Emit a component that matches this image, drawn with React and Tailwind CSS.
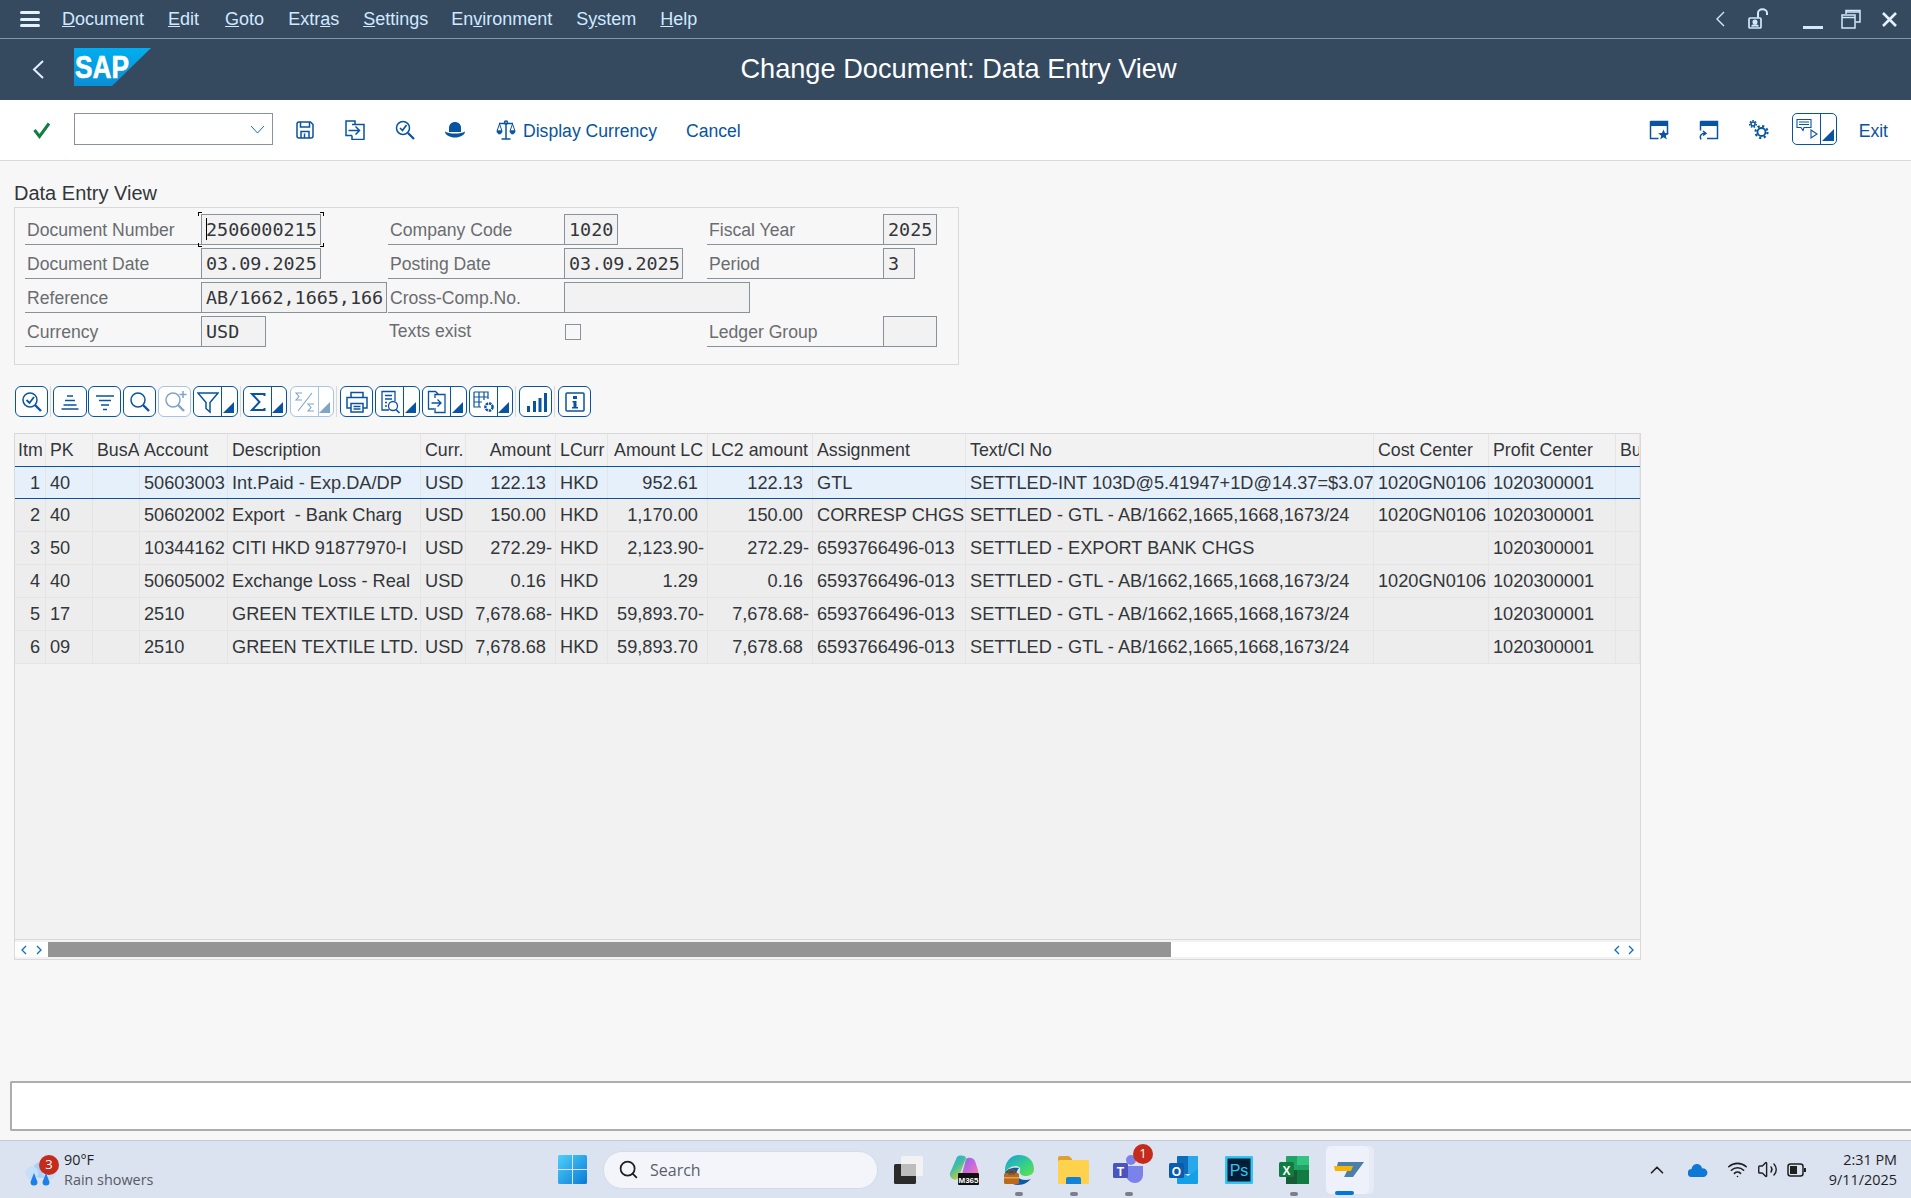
import React from "react";
import { Search, Wifi, Volume2, ChevronUp } from "lucide-react";

const columns = [
  { key: "itm", label: "Itm", w: "w-[31px]", right: true, pad: "pl-[3px] pr-[5px]" },
  { key: "pk", label: "PK", w: "w-[47px]" },
  { key: "busa", label: "BusA", w: "w-[47px]" },
  { key: "account", label: "Account", w: "w-[88px]" },
  { key: "desc", label: "Description", w: "w-[193px]" },
  { key: "curr", label: "Curr.", w: "w-[45px]" },
  { key: "amount", label: "Amount", w: "w-[90px]", right: true, sign: true },
  { key: "lcurr", label: "LCurr", w: "w-[52px]" },
  { key: "amountLc", label: "Amount LC", w: "w-[100px]", right: true, sign: true },
  { key: "lc2", label: "LC2 amount", w: "w-[105px]", right: true, sign: true },
  { key: "assign", label: "Assignment", w: "w-[153px]" },
  { key: "text", label: "Text/Cl No", w: "w-[408px]" },
  { key: "cost", label: "Cost Center", w: "w-[115px]" },
  { key: "profit", label: "Profit Center", w: "w-[127px]" },
  { key: "bu", label: "Bu", w: "flex-1" },
];

const settled = "SETTLED - GTL - AB/1662,1665,1668,1673/24";
const rows = [
  { itm: "1", pk: "40", account: "50603003", desc: "Int.Paid - Exp.DA/DP", curr: "USD", amount: "122.13", lcurr: "HKD", amountLc: "952.61", lc2: "122.13", assign: "GTL", text: "SETTLED-INT 103D@5.41947+1D@14.37=$3.07", cost: "1020GN0106", profit: "1020300001" },
  { itm: "2", pk: "40", account: "50602002", desc: "Export  - Bank Charg", curr: "USD", amount: "150.00", lcurr: "HKD", amountLc: "1,170.00", lc2: "150.00", assign: "CORRESP CHGS", text: settled, cost: "1020GN0106", profit: "1020300001" },
  { itm: "3", pk: "50", account: "10344162", desc: "CITI HKD 91877970-I", curr: "USD", amount: "272.29-", lcurr: "HKD", amountLc: "2,123.90-", lc2: "272.29-", assign: "6593766496-013", text: "SETTLED - EXPORT BANK CHGS", cost: "", profit: "1020300001" },
  { itm: "4", pk: "40", account: "50605002", desc: "Exchange Loss - Real", curr: "USD", amount: "0.16", lcurr: "HKD", amountLc: "1.29", lc2: "0.16", assign: "6593766496-013", text: settled, cost: "1020GN0106", profit: "1020300001" },
  { itm: "5", pk: "17", account: "2510", desc: "GREEN TEXTILE LTD.", curr: "USD", amount: "7,678.68-", lcurr: "HKD", amountLc: "59,893.70-", lc2: "7,678.68-", assign: "6593766496-013", text: settled, cost: "", profit: "1020300001" },
  { itm: "6", pk: "09", account: "2510", desc: "GREEN TEXTILE LTD.", curr: "USD", amount: "7,678.68", lcurr: "HKD", amountLc: "59,893.70", lc2: "7,678.68", assign: "6593766496-013", text: settled, cost: "", profit: "1020300001" },
];

const Ic = ({ w = 24, h = 24, vb = "0 0 24 24", className = "", children }) => (
  <svg width={w} height={h} viewBox={vb} fill="none" stroke="#0854a0" strokeWidth="1.5" className={`shrink-0 ${className}`}>
    {children}
  </svg>
);

const Menu = ({ className = "", children }) => <span className={`whitespace-nowrap ${className}`}>{children}</span>;

const Field = ({ label, w, value, children }) => (
  <div className="flex h-[31px]">
    <div className="w-[176px] shrink-0 border-b border-[#89919a] pl-[2px] pt-[3px] text-[#6a6d70]">{label}</div>
    {children || (
      <div className={`relative h-[31px] shrink-0 overflow-hidden whitespace-pre border border-[#89919a] bg-[#f2f2f2] pl-[4px] font-['DejaVu_Sans_Mono',monospace] text-[18.4px] leading-[30px] text-[#32363a] ${w}`}>
        {value}
      </div>
    )}
  </div>
);

const GridBtn = ({ w, split, dim, ml, children }) => (
  <div className={`flex h-[31px] shrink-0 items-center rounded-[6px] border-[1.5px] bg-white ${dim ? "border-[#a9c4e0]" : "border-[#0854a0]"} ${w} ${ml}`}>
    <div className={`flex h-full items-center justify-center ${split ? "w-[28px] border-r border-inherit" : "w-full"}`}>{children}</div>
    {split && (
      <div className="flex h-full flex-1 items-end justify-end pb-[3px] pr-[3px]">
        <svg width="11" height="11" viewBox="0 0 11 11"><path d="M11 0V11H0Z" fill={dim ? "#7fa3cc" : "#0854a0"} /></svg>
      </div>
    )}
  </div>
);

const Sep = () => <div className="mx-[2px] h-[31px] w-px shrink-0 bg-[#d9d9d9]" />;

const Zoom = ({ dim, plus, check }) => (
  <Ic w={24} h={24}>
    <circle cx="10" cy="10" r="7" stroke={dim ? "#7fa3cc" : "#0854a0"} />
    <path d="M15 15l6 6" stroke={dim ? "#7fa3cc" : "#0854a0"} strokeWidth="2.400" />
    {check && <path d="M6.500 10l3 3 4.500-6" strokeWidth="1.800" />}
    {plus && <path d="M20 1v7M16.500 4.500h7" stroke="#7fa3cc" />}
  </Ic>
);

const Slot = ({ dot, active, children }) => (
  <div className="relative flex h-[58px] w-[55px] shrink-0 items-center justify-center">
    {active && <div className="absolute left-[5px] top-[5px] h-[48px] w-[43px] rounded-[5px] bg-[#eef1f9] shadow-[5px_0_0_#e6ebf5]" />}
    <div className="relative flex items-center justify-center">{children}</div>
    {dot && <div className="absolute bottom-[3px] left-[24px] h-[4px] w-[8px] rounded-full bg-[#7a7f8a]" />}
    {active && <div className="absolute bottom-[4px] left-[14px] h-[4px] w-[19px] rounded-sm bg-[#0078d4]" />}
  </div>
);

export default function App() {
  return (
    <div className="flex h-screen w-full flex-col overflow-hidden bg-[#f7f7f7] font-['Liberation_Sans',Arial,sans-serif] text-[17.6px] text-[#32363a]">
      {/* shell header */}
      <div className="flex h-[39px] shrink-0 items-center border-b border-[#7f96b0] bg-[#354a5f] pl-[20px] pr-[14px] text-[18px] text-[#d1e8ff]">
        <div className="flex w-[20px] shrink-0 flex-col gap-[3.500px]">
          <div className="h-[3px] rounded-sm bg-[#e3f0ff]" />
          <div className="h-[3px] rounded-sm bg-[#e3f0ff]" />
          <div className="h-[3px] rounded-sm bg-[#e3f0ff]" />
        </div>
        <div className="ml-[22px] flex gap-[24px]">
          <Menu><u>D</u>ocument</Menu>
          <Menu><u>E</u>dit</Menu>
          <Menu className="ml-[2px]"><u>G</u>oto</Menu>
          <Menu>Extr<u>a</u>s</Menu>
          <Menu><u>S</u>ettings</Menu>
          <Menu className="ml-[-1px]">En<u>v</u>ironment</Menu>
          <Menu>S<u>y</u>stem</Menu>
          <Menu><u>H</u>elp</Menu>
        </div>
        <div className="ml-auto flex items-center">
          <svg width="10" height="16" viewBox="0 0 10 16" fill="none" stroke="#d1e8ff" strokeWidth="1.400"><path d="M9 1L2 8l7 7" /></svg>
          <svg width="22" height="22" viewBox="0 0 22 22" fill="none" stroke="#d1e8ff" strokeWidth="1.700" className="ml-[23px]">
            <rect x="1" y="10" width="12" height="10" rx="1" />
            <circle cx="7" cy="14" r="1.700" fill="#d1e8ff" />
            <path d="M4 18.500c0-2 6-2 6 0" fill="#d1e8ff" />
            <path d="M10 10V5c0-5 9-5 9 0v2" strokeWidth="2" />
          </svg>
          <div className="ml-[33px] mt-[16px] h-[3px] w-[20px] bg-[#d1e8ff]" />
          <svg width="20" height="20" viewBox="0 0 20 20" fill="none" stroke="#d1e8ff" strokeWidth="1.500" className="ml-[18px]">
            <rect x="1" y="6" width="13" height="13" />
            <path d="M1 8.500h13" />
            <path d="M5 5V1.500h14V13h-4.500" />
            <path d="M5 3h14" />
          </svg>
          <svg width="15" height="15" viewBox="0 0 15 15" fill="none" stroke="#e3f0ff" strokeWidth="2.600" className="ml-[21px]"><path d="M1 1l13 13M14 1L1 14" /></svg>
        </div>
      </div>

      {/* title bar */}
      <div className="relative flex h-[61px] shrink-0 items-center justify-center bg-[#354a5f] pl-[6px] text-[27.2px] text-white">
        <div className="absolute left-[32px] top-[21px]">
          <svg width="12" height="19" viewBox="0 0 12 19" fill="none" stroke="#e3f0ff" strokeWidth="2"><path d="M11 1L2 9.500l9 8.500" /></svg>
        </div>
        <div className="absolute left-[74px] top-[9px]">
          <svg width="77" height="38" viewBox="0 0 77 38">
            <defs>
              <linearGradient id="sapg" x1="0" y1="0" x2="0" y2="1">
                <stop offset="0" stopColor="#00aeef" />
                <stop offset="1" stopColor="#0a8fd6" />
              </linearGradient>
            </defs>
            <path d="M0 0H77L38 38H0Z" fill="url(#sapg)" />
            <text x="1" y="30" fontFamily="Liberation Sans" fontWeight="700" fontSize="31" fill="#fff" stroke="#fff" strokeWidth="0.600" textLength="54" lengthAdjust="spacingAndGlyphs">SAP</text>
          </svg>
        </div>
        <span>Change Document: Data Entry View</span>
      </div>

      {/* app toolbar */}
      <div className="flex h-[61px] shrink-0 items-center border-b border-[#d9d9d9] bg-white pl-[33px] pr-[23px] text-[#0854a0]">
        <svg width="18" height="18" viewBox="0 0 18 18" fill="none" stroke="#107e3e" strokeWidth="3"><path d="M1.500 9l5 6.500L16 2.500" /></svg>
        <div className="mb-[2px] ml-[23px] flex h-[32px] w-[199px] shrink-0 items-center justify-end border border-[#89919a] bg-white pr-[7px]">
          <svg width="15" height="9" viewBox="0 0 15 9" fill="none" stroke="#0a6ed1" strokeWidth="1"><path d="M1 1l6.500 7L14 1" /></svg>
        </div>
        <Ic w={18} h={18} vb="0 0 18 18" className="ml-[23px]">
          <path d="M3 1h11.500L17 3.500V15a2 2 0 0 1-2 2H3a2 2 0 0 1-2-2V3a2 2 0 0 1 2-2Z" />
          <path d="M4.500 1v5h9V1M5 17v-6.500h8V17M8.500 12.500V17" />
        </Ic>
        <Ic w={20} h={20} vb="0 0 20 20" className="ml-[31px]">
          <path d="M7 15.500H1V1h9v3.500" />
          <path d="M7 4.500h12v15H7v-4" />
          <path d="M3.500 10.500h10.500M10.500 6.500l4 4-4 4" />
        </Ic>
        <Ic w={20} h={20} vb="0 0 20 20" className="ml-[30px]">
          <circle cx="8" cy="8" r="6.500" />
          <path d="M5 8l2.500 2.500L11.500 5" strokeWidth="1.700" />
          <path d="M13 13l6 6" strokeWidth="2.300" />
        </Ic>
        <svg width="20" height="16" viewBox="0 0 20 16" className="ml-[30px]" fill="#0854a0">
          <path d="M4 10V6c0-8 12-8 12 0v4Z" />
          <path d="M0 9.500c3 1.500 5 2 10 2s7-.5 10-2c0 3.500-5 6-10 6S0 13 0 9.500Z" />
        </svg>
        <Ic w={20} h={20} vb="0 0 20 20" className="ml-[31px]">
          <circle cx="10" cy="2.500" r="1.500" />
          <path d="M10 4v15M5.500 19h9M3 3.500h14" />
          <path d="M3.500 4L1 11h5ZM16.500 4L14 11h5Z" strokeWidth="1" />
          <path d="M1 11c0 4 5 4 5 0ZM14 11c0 4 5 4 5 0Z" fill="#0854a0" strokeWidth="0.800" />
        </Ic>
        <span className="ml-[7px] mt-[2px] whitespace-nowrap">Display Currency</span>
        <span className="ml-[29px] mt-[2px]">Cancel</span>
        <div className="ml-auto flex items-center">
          <Ic w={20} h={20} vb="0 0 20 20">
            <path d="M1.500 1.500h17v13M1.500 1.500v17h8" />
            <path d="M1 1h18v5H1Z" fill="#0854a0" stroke="none" />
            <path d="M14.500 9.500l1.500 3.600 3.800.2-3 2.400 1 3.700-3.300-2.100-3.300 2.100 1-3.700-3-2.400 3.800-.2Z" fill="#0854a0" stroke="none" />
          </Ic>
          <Ic w={20} h={20} vb="0 0 20 20" className="ml-[30px]">
            <path d="M1.500 1.500h17v17H8M1.500 1.500v9" />
            <path d="M1 1h18v5H1Z" fill="#0854a0" stroke="none" />
            <path d="M2 19.500c-2-4 1-7 5-6M4 11l3 2.500-3 2" />
          </Ic>
          <Ic w={20} h={20} vb="0 0 20 20" className="ml-[30px]">
            <circle cx="12.500" cy="12" r="4" strokeWidth="1.800" />
            <circle cx="12.500" cy="12" r="6" strokeWidth="2.200" strokeDasharray="2.200 2.500" />
            <circle cx="4" cy="4" r="2" strokeWidth="1.500" />
            <circle cx="4" cy="4" r="3.300" strokeWidth="1.500" strokeDasharray="1.500 1.400" />
          </Ic>
          <div className="mb-[2px] ml-[23px] flex h-[32px] w-[45px] items-stretch rounded-[5px] border-[1.500px] border-[#0854a0]">
            <div className="flex w-[28px] items-center justify-center border-r border-[#0854a0]">
              <Ic w={22} h={24} vb="0 0 22 24" className="ml-[1px]">
                <path d="M1 2.500h14v8H8l-1 3-2-3H1Z" strokeWidth="1.100" />
                <path d="M3 5h10M3 7.500h10" strokeWidth="1.100" />
                <path d="M15 13l6 4-6 4Z" strokeWidth="1.100" />
              </Ic>
            </div>
            <div className="flex flex-1 items-end justify-end pb-[3px] pr-[2px]">
              <svg width="12" height="12" viewBox="0 0 12 12"><path d="M12 0V12H0Z" fill="#0854a0" /></svg>
            </div>
          </div>
          <span className="ml-[22px] mt-[2px]">Exit</span>
        </div>
      </div>

      {/* data entry form */}
      <div className="flex-1 pl-[14px]">
        <div className="h-[46px] pt-[21px] text-[20px] leading-[22px] text-[#32363a]">Data Entry View</div>
        <div className="h-[158px] w-[945px] border border-[#d9d9d9] pl-[10px] pt-[6px]">
          <div className="grid grid-cols-[363px_319px_1fr] gap-y-[3px]">
            <div className="relative">
              <Field label="Document Number" w="w-[120px]" value="2506000215" />
              <div className="absolute left-[173px] top-[-2px] h-[35px] w-[126px]">
                <div className="absolute left-0 top-0 h-[4px] w-[4px] border-l border-t border-black" />
                <div className="absolute right-0 top-0 h-[4px] w-[4px] border-r border-t border-black" />
                <div className="absolute bottom-0 left-0 h-[4px] w-[4px] border-b border-l border-black" />
                <div className="absolute bottom-0 right-0 h-[4px] w-[4px] border-b border-r border-black" />
                <div className="absolute left-[8px] top-[6px] h-[22px] w-px bg-black" />
              </div>
            </div>
            <Field label="Company Code" w="w-[54px]" value="1020" />
            <Field label="Fiscal Year" w="w-[54px]" value="2025" />
            <Field label="Document Date" w="w-[120px]" value="03.09.2025" />
            <Field label="Posting Date" w="w-[119px]" value="03.09.2025" />
            <Field label="Period" w="w-[32px]" value="3" />
            <Field label="Reference" w="w-[186px]" value="AB/1662,1665,166" />
            <Field label="Cross-Comp.No." w="w-[186px]" value="" />
            <div />
            <Field label="Currency" w="w-[65px]" value="USD" />
            <div className="flex h-[31px]">
              <div className="w-[176px] shrink-0 pl-[1px] pt-[2px] text-[#6a6d70]">Texts exist</div>
              <div className="ml-[1px] mt-[8px] h-[16px] w-[16px] border border-[#89919a] bg-[#f7f7f7]" />
            </div>
            <Field label="Ledger Group" w="w-[54px]" value="" />
          </div>
        </div>

        {/* grid toolbar */}
        <div className="mt-[21px] flex h-[31px] items-center pl-[1px]">
          <GridBtn w="w-[33px]"><Zoom check /></GridBtn>
          <Sep />
          <GridBtn w="w-[34px]">
            <Ic w={22} h={22} vb="0 0 22 22"><path d="M8 5h6M6 9.500h10M4.500 14h13M2.500 18h17" /></Ic>
          </GridBtn>
          <GridBtn w="w-[33px]" ml="ml-[1px]">
            <Ic w={22} h={22} vb="0 0 22 22"><path d="M2 5h18M5 9.500h12M7 14h8M9 18.500h4" /></Ic>
          </GridBtn>
          <GridBtn w="w-[33px]" ml="ml-[2px]"><Zoom /></GridBtn>
          <GridBtn w="w-[33px]" ml="ml-[2px]" dim><Zoom dim plus /></GridBtn>
          <GridBtn w="w-[45px]" ml="ml-[2px]" split>
            <Ic w={22} h={24} vb="0 0 22 24"><path d="M1 3h20l-8 9.500V22l-4-3.500v-6Z" /></Ic>
          </GridBtn>
          <Sep />
          <GridBtn w="w-[44px]" split>
            <Ic w={18} h={20} vb="0 0 18 20"><path d="M15.500 4V2H3l7.500 8L3 18h12.500v-2" strokeWidth="2" /></Ic>
          </GridBtn>
          <GridBtn w="w-[44px]" ml="ml-[3px]" split dim>
            <Ic w={22} h={24} vb="0 0 22 24">
              <path d="M8 3H2l3 3.500L2 10h6M20 14h-6l3 3.500-3 3.500h6M18 3L4 21" stroke="#7fa3cc" strokeWidth="1.100" />
            </Ic>
          </GridBtn>
          <Sep />
          <GridBtn w="w-[33px]" ml="ml-[1px]">
            <Ic w={24} h={24}>
              <path d="M6 7V2.500h12V7M6 18H2V7.500h20V18h-4" />
              <path d="M6 13.500h12v8.500H6ZM8.500 16.500h7M8.500 19h7" />
            </Ic>
          </GridBtn>
          <GridBtn w="w-[45px]" ml="ml-[2px]" split>
            <Ic w={22} h={24} vb="0 0 22 24" className="ml-[2px]">
              <path d="M9 20H2V1.500h13V11M5 5.500h7M5 9h7M5 12.500h2M5 16h2" strokeWidth="1.300" />
              <circle cx="13" cy="16" r="4.500" strokeWidth="1.300" />
              <path d="M16 19.500l3.500 3.500" strokeWidth="1.700" />
            </Ic>
          </GridBtn>
          <GridBtn w="w-[45px]" ml="ml-[2px]" split>
            <Ic w={22} h={24} vb="0 0 22 24" className="ml-[2px]">
              <path d="M7 19H1.500V1.500h7l3 3M8 8V4.500h10v18H8V18" strokeWidth="1.300" />
              <path d="M4.500 13h9M10.500 9.500l3.500 3.500-3.500 3.500" strokeWidth="1.300" />
            </Ic>
          </GridBtn>
          <GridBtn w="w-[44px]" ml="ml-[2px]" split>
            <Ic w={24} h={24}>
              <path d="M2 2h14v7M2 2v15h7M2 7h14M2 12h8M7 2v15M12 2v8" strokeWidth="1.200" />
              <circle cx="17" cy="17" r="3.600" strokeWidth="2.400" strokeDasharray="2.500 0.800" />
            </Ic>
          </GridBtn>
          <Sep />
          <GridBtn w="w-[33px]" ml="ml-[1px]">
            <svg width="22" height="22" viewBox="0 0 22 22" fill="#0854a0"><path d="M2 15h3v6H2ZM8 10h3v11H8ZM13.500 7h3v14h-3ZM19 2h3v19h-3Z" /></svg>
          </GridBtn>
          <Sep />
          <GridBtn w="w-[33px]" ml="ml-[1px]">
            <Ic w={22} h={22} vb="0 0 22 22">
              <rect x="2" y="2" width="18" height="18" rx="1" />
              <path d="M9 5h4v3H9ZM8.500 10H12.500V16H14V17.500H8V16H9.500V11.500H8.500Z" fill="#0854a0" stroke="none" />
            </Ic>
          </GridBtn>
        </div>

        {/* table */}
        <div className="mt-[16px] flex h-[527px] w-[1627px] flex-col border-x border-[#d9d9d9]">
          <div className="flex h-[33px] shrink-0 border-t border-[#d9d9d9] bg-[#f2f2f2] text-[17.8px]">
            {columns.map((c) => (
              <div key={c.key} className={`shrink-0 overflow-hidden whitespace-pre border-r border-[#e5e5e5] pt-[3px] ${c.w} ${c.pad || (c.right ? "pr-[4px]" : "pl-[4px]")} ${c.right ? "text-right" : ""}`}>
                {c.label}
              </div>
            ))}
          </div>
          <div className="flex-1 bg-[#f2f2f2] text-[18.2px]">
            {rows.map((r, i) => (
              <div key={r.itm} className={`flex h-[33px] border-b ${i === 0 ? "border-y border-[#0854a0] bg-[#e5f0fa]" : "border-[#e5e5e5] bg-[#ededed]"}`}>
                {columns.map((c) => (
                  <div key={c.key} className={`shrink-0 overflow-hidden whitespace-pre border-r border-[#e5e5e5] pt-[3px] ${c.w} ${c.pad || (c.right ? "pr-[3px]" : "pl-[4px]")} ${c.right ? "text-right" : ""}`}>
                    {r[c.key]}
                    {c.sign && !r[c.key].endsWith("-") && <span className="invisible">-</span>}
                  </div>
                ))}
              </div>
            ))}
          </div>
          {/* horizontal scrollbar */}
          <div className="flex h-[21px] shrink-0 flex-col border-y border-[#d9d9d9] bg-[#f2f2f2] pt-[2px]">
            <div className="flex h-[15px] bg-white">
              <div className="flex w-[33px] items-center justify-around px-[2px]">
                <svg width="6" height="10" viewBox="0 0 6 10" fill="none" stroke="#0a6ed1" strokeWidth="1.300"><path d="M5 1L1 5l4 4" /></svg>
                <svg width="6" height="10" viewBox="0 0 6 10" fill="none" stroke="#0a6ed1" strokeWidth="1.300"><path d="M1 1l4 4-4 4" /></svg>
              </div>
              <div className="w-[1123px] bg-[#949494]" />
              <div className="ml-auto flex w-[32px] items-center justify-around px-[2px]">
                <svg width="6" height="10" viewBox="0 0 6 10" fill="none" stroke="#0a6ed1" strokeWidth="1.300"><path d="M5 1L1 5l4 4" /></svg>
                <svg width="6" height="10" viewBox="0 0 6 10" fill="none" stroke="#0a6ed1" strokeWidth="1.300"><path d="M1 1l4 4-4 4" /></svg>
              </div>
            </div>
          </div>
        </div>
      </div>

      {/* status input */}
      <div className="mb-[9px] ml-[10px] h-[50px] shrink-0 rounded-l-[2px] border-2 border-r-0 border-[#adadad] bg-white" />

      {/* windows taskbar */}
      <div className="flex h-[58px] shrink-0 items-center border-t border-[#c3c8d6] bg-[#dbe2f0] font-['Open_Sans',sans-serif] text-[14.400px]">
        <div className="relative flex w-[558px] shrink-0 items-center pl-[25px]">
          <svg width="31" height="26" viewBox="0 0 31 26" className="mt-[10px]">
            <circle cx="16" cy="8" r="8" fill="#a9d0f5" />
            <circle cx="7" cy="11" r="6.500" fill="#c3dff9" />
            <circle cx="24" cy="11" r="6.500" fill="#c3dff9" />
            <path d="M9 11l3.500 9a3.500 3.500 0 1 1-7 0ZM21 11l3.500 9a3.500 3.500 0 1 1-7 0Z" fill="#1f7fe8" />
          </svg>
          <div className="absolute left-[39px] top-[5px] flex h-[20px] w-[20px] items-center justify-center rounded-full bg-[#c42b1c] text-[13px] text-white">3</div>
          <div className="ml-[8px] leading-[20px]">
            <div className="text-[#1f1f1f]">90°F</div>
            <div className="text-[#555b66]">Rain showers</div>
          </div>
        </div>
        <svg width="29" height="29" viewBox="0 0 29 29" className="shrink-0">
          <defs>
            <linearGradient id="wing" x1="0" y1="0" x2="1" y2="1">
              <stop offset="0" stopColor="#4fd0fb" />
              <stop offset="1" stopColor="#0a79d6" />
            </linearGradient>
          </defs>
          <path d="M0 1.500A1.500 1.500 0 0 1 1.500 0H14V14H0ZM15 0h12.500A1.500 1.500 0 0 1 29 1.500V14H15ZM0 15H14V29H1.500A1.500 1.500 0 0 1 0 27.500ZM15 15H29V27.500A1.500 1.500 0 0 1 27.500 29H15Z" fill="url(#wing)" />
        </svg>
        <div className="ml-[16px] flex h-[38px] w-[275px] shrink-0 items-center rounded-full border border-[#d5dbe8] bg-[#f3f5fb] pl-[14px] text-[16px] text-[#5b5f68]">
          <Search size={21} strokeWidth={2} color="#1f1f1f" />
          <span className="ml-[11px]">Search</span>
        </div>
        <div className="ml-[3px] flex shrink-0">
          <Slot>
            <svg width="31" height="28" viewBox="0 0 31 28">
              <rect x="1" y="8" width="22" height="20" rx="1.500" fill="#2b2b2b" />
              <rect x="8" y="0" width="22" height="20" rx="1.500" fill="#f2f2f2" />
              <rect x="8" y="8" width="15" height="12" fill="#bdbdbd" />
            </svg>
          </Slot>
          <Slot>
            <svg width="30" height="30" viewBox="0 0 30 30">
              <defs>
                <linearGradient id="mg" x1="0" y1="0" x2="0.600" y2="1">
                  <stop offset="0" stopColor="#27a8e8" />
                  <stop offset="0.500" stopColor="#3fc0a0" />
                  <stop offset="1" stopColor="#e6c53a" />
                </linearGradient>
                <linearGradient id="mg2" x1="0" y1="0" x2="1" y2="1">
                  <stop offset="0" stopColor="#7a6be8" />
                  <stop offset="0.600" stopColor="#d66ad8" />
                  <stop offset="1" stopColor="#f58a7a" />
                </linearGradient>
              </defs>
              <path d="M8 2c2-2 8-2 9 1L9 24c-4 2-9-1-8-6Z" fill="url(#mg)" />
              <path d="M17 4c2-2 7-2 9 2l3 9c1 4-2 8-6 8H12Z" fill="url(#mg2)" />
              <rect x="9" y="18" width="21" height="12" rx="1" fill="#111" />
              <text x="19.500" y="27.500" textAnchor="middle" fontFamily="Liberation Sans" fontWeight="700" fontSize="8" fill="#fff">M365</text>
            </svg>
          </Slot>
          <Slot dot>
            <svg width="30" height="30" viewBox="0 0 30 30">
              <defs>
                <linearGradient id="eg" x1="0" y1="0" x2="1" y2="1">
                  <stop offset="0" stopColor="#1b9de2" />
                  <stop offset="0.600" stopColor="#36d184" />
                  <stop offset="1" stopColor="#6be04a" />
                </linearGradient>
              </defs>
              <path d="M15 0c9 0 15 6 15 14 0 5-4 7-8 7-5 0-7-3-6-6 1-2-1-4-4-4C6 11 2 15 1 18 0 8 6 0 15 0Z" fill="url(#eg)" />
              <path d="M1 18c0 7 6 12 13 12 6 0 10-3 13-6-5 2-12 1-14-3-1-3 0-6 2-8-8-1-13 2-14 5Z" fill="#0c59a4" />
              <rect x="0" y="18" width="15" height="11" rx="1.500" fill="#b96a1d" />
              <rect x="4.500" y="15" width="6" height="4" rx="1" fill="none" stroke="#8a4e16" strokeWidth="1.500" />
              <rect x="0" y="22" width="15" height="1.500" fill="#e2a64c" />
            </svg>
          </Slot>
          <Slot dot>
            <svg width="31" height="28" viewBox="0 0 31 28">
              <path d="M0 2a2 2 0 0 1 2-2h9l3 3v6H0Z" fill="#e0a030" />
              <rect x="0" y="4" width="31" height="24" rx="1.500" fill="#ffd24d" />
              <path d="M8 28v-5a2 2 0 0 1 2-2h11a2 2 0 0 1 2 2v5Z" fill="#1283d9" />
            </svg>
          </Slot>
          <Slot dot>
            <div className="relative">
              <svg width="31" height="30" viewBox="0 0 31 30">
                <circle cx="18" cy="5" r="5" fill="#7b83eb" />
                <path d="M10 11h20v9a8 8 0 0 1-8 8 9 9 0 0 1-9-7Z" fill="#7b83eb" />
                <rect x="0" y="8" width="15" height="15" rx="1.500" fill="#4b53bc" />
                <text x="7.500" y="20.500" textAnchor="middle" fontFamily="Liberation Sans" fontWeight="700" fontSize="12" fill="#fff">T</text>
              </svg>
              <div className="absolute right-[-9px] top-[-11px] flex h-[20px] w-[20px] items-center justify-center rounded-full bg-[#c42b1c] text-[13px] text-white">1</div>
            </div>
          </Slot>
          <Slot>
            <svg width="30" height="28" viewBox="0 0 30 28">
              <rect x="8" y="0" width="21" height="9" rx="1" fill="#0f6cbd" />
              <rect x="8" y="9" width="11" height="9" fill="#0f6cbd" />
              <rect x="19" y="0" width="10" height="9" fill="#28a8ea" />
              <rect x="19" y="9" width="10" height="9" fill="#28a8ea" />
              <path d="M8 13l11 7 10-7v14a1 1 0 0 1-1 1H9a1 1 0 0 1-1-1Z" fill="#14a0e6" />
              <rect x="0" y="7" width="15" height="15" rx="1.500" fill="#0b5cad" />
              <text x="7.500" y="19.500" textAnchor="middle" fontFamily="Liberation Sans" fontWeight="700" fontSize="12" fill="#fff">O</text>
            </svg>
          </Slot>
          <Slot>
            <svg width="28" height="28" viewBox="0 0 28 28">
              <rect x="0" y="0" width="28" height="28" rx="1" fill="#31c5f4" />
              <rect x="2.500" y="2.500" width="23" height="23" fill="#001e36" />
              <text x="14" y="20" textAnchor="middle" fontFamily="Liberation Sans" fontSize="16" fill="#31c5f4">Ps</text>
            </svg>
          </Slot>
          <Slot dot>
            <svg width="30" height="28" viewBox="0 0 30 28">
              <path d="M7 1a1 1 0 0 1 1-1h21a1 1 0 0 1 1 1v26a1 1 0 0 1-1 1H8a1 1 0 0 1-1-1Z" fill="#21a366" />
              <rect x="18" y="0" width="12" height="9" fill="#33c481" />
              <rect x="7" y="14" width="11" height="14" fill="#185c37" />
              <rect x="18" y="14" width="12" height="14" fill="#107c41" />
              <rect x="0" y="6" width="15" height="15" rx="1.500" fill="#107c41" />
              <text x="7.500" y="18.500" textAnchor="middle" fontFamily="Liberation Sans" fontWeight="700" fontSize="12" fill="#fff">X</text>
            </svg>
          </Slot>
          <Slot active>
            <svg width="30" height="15" viewBox="0 0 30 15">
              <path d="M4 0H30L19 15H10L13 9H14L16 4H3Z" fill="#4a7fa8" />
              <path d="M0 4H19L17 9H1Z" fill="#f7b500" />
            </svg>
          </Slot>
        </div>
        <div className="ml-auto flex items-center pr-[14px]">
          <ChevronUp size={22} strokeWidth={1.800} color="#1f1f1f" />
          <svg width="20" height="14" viewBox="0 0 20 14" className="ml-[20px]">
            <path d="M4 14a4 4 0 0 1-.5-8C4 2 8 0 11 1.500c2 1 3 2.500 3 4a4 4 0 0 1 2 8.500Z" fill="#0f78d4" />
          </svg>
          <Wifi size={21} strokeWidth={1.800} color="#1f1f1f" className="ml-[19px]" />
          <Volume2 size={21} strokeWidth={1.600} color="#1f1f1f" className="ml-[9px]" />
          <svg width="20" height="14" viewBox="0 0 20 14" fill="none" stroke="#1f1f1f" strokeWidth="1.500" className="ml-[9px]">
            <rect x="1" y="1" width="15" height="12" rx="2.500" />
            <rect x="3" y="3" width="7" height="8" fill="#1f1f1f" stroke="none" />
            <path d="M18 5v4" strokeWidth="2" />
          </svg>
          <div className="ml-[22px] text-right leading-[20px] text-[#1f1f1f]">
            <div>2:31 PM</div>
            <div>9/11/2025</div>
          </div>
        </div>
      </div>
    </div>
  );
}
